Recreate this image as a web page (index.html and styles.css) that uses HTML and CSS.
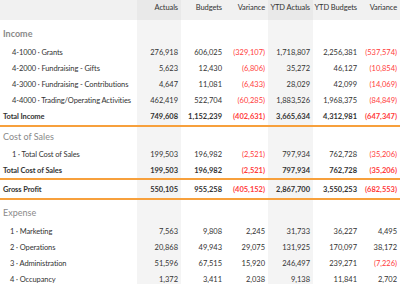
FILE: index.html
```html
<!DOCTYPE html>
<html lang="en">

<head>
    <meta charset="UTF-8">
    <title>Profit and Loss</title>
    <link rel="stylesheet" href="styles.css">
</head>

<body>
    <table class="pl">
        <colgroup>
            <col class="c-label">
            <col class="c-num shade">
            <col class="c-num">
            <col class="c-var">
            <col class="c-ytd shade">
            <col class="c-ytdb">
            <col class="c-var2">
        </colgroup>
        <thead>
            <tr>
                <th></th>
                <th class="shade">Actuals</th>
                <th>Budgets</th>
                <th>Variance</th>
                <th class="shade">YTD Actuals</th>
                <th>YTD Budgets</th>
                <th>Variance</th>
            </tr>
        </thead>
        <tbody>
            <tr class="section first">
                <td class="strong">Income</td>
                <td class="shade"></td><td></td><td></td><td class="shade"></td><td></td><td></td>
            </tr>
            <tr class="item">
                <td>4-1000 · Grants</td>
                <td class="shade">276,918</td><td>606,025</td><td class="neg">(329,107)</td>
                <td class="shade">1,718,807</td><td>2,256,381</td><td class="neg">(537,574)</td>
            </tr>
            <tr class="item">
                <td>4-2000 · Fundraising - Gifts</td>
                <td class="shade">5,623</td><td>12,430</td><td class="neg">(6,806)</td>
                <td class="shade">35,272</td><td>46,127</td><td class="neg">(10,854)</td>
            </tr>
            <tr class="item">
                <td>4-3000 · Fundraising - Contributions</td>
                <td class="shade">4,647</td><td>11,081</td><td class="neg">(6,433)</td>
                <td class="shade">28,029</td><td>42,099</td><td class="neg">(14,069)</td>
            </tr>
            <tr class="item">
                <td>4-4000 · Trading/Operating Activities</td>
                <td class="shade">462,419</td><td>522,704</td><td class="neg">(60,285)</td>
                <td class="shade">1,883,526</td><td>1,968,375</td><td class="neg">(84,849)</td>
            </tr>
            <tr class="total t-income">
                <td>Total Income</td>
                <td class="shade">749,608</td><td>1,152,239</td><td class="neg">(402,631)</td>
                <td class="shade">3,665,634</td><td>4,312,981</td><td class="neg">(647,347)</td>
            </tr>
            <tr class="section cos">
                <td>Cost of Sales</td>
                <td class="shade"></td><td></td><td></td><td class="shade"></td><td></td><td></td>
            </tr>
            <tr class="item">
                <td>1 · Total Cost of Sales</td>
                <td class="shade">199,503</td><td>196,982</td><td class="neg">(2,521)</td>
                <td class="shade">797,934</td><td>762,728</td><td class="neg">(35,206)</td>
            </tr>
            <tr class="total">
                <td>Total Cost of Sales</td>
                <td class="shade">199,503</td><td>196,982</td><td class="neg">(2,521)</td>
                <td class="shade">797,934</td><td>762,728</td><td class="neg">(35,206)</td>
            </tr>
            <tr class="total gross">
                <td>Gross Profit</td>
                <td class="shade">550,105</td><td>955,258</td><td class="neg">(405,152)</td>
                <td class="shade">2,867,700</td><td>3,550,253</td><td class="neg">(682,553)</td>
            </tr>
            <tr class="section exp">
                <td>Expense</td>
                <td class="shade"></td><td></td><td></td><td class="shade"></td><td></td><td></td>
            </tr>
            <tr class="item sub">
                <td>1 · Marketing</td>
                <td class="shade">7,563</td><td>9,808</td><td>2,245</td>
                <td class="shade">31,733</td><td>36,227</td><td>4,495</td>
            </tr>
            <tr class="item sub">
                <td>2 · Operations</td>
                <td class="shade">20,868</td><td>49,943</td><td>29,075</td>
                <td class="shade">131,925</td><td>170,097</td><td>38,172</td>
            </tr>
            <tr class="item sub">
                <td>3 · Administration</td>
                <td class="shade">51,596</td><td>67,515</td><td>15,920</td>
                <td class="shade">246,497</td><td>239,271</td><td class="neg">(7,226)</td>
            </tr>
            <tr class="item sub">
                <td>4 · Occupancy</td>
                <td class="shade">1,372</td><td>3,411</td><td>2,038</td>
                <td class="shade">9,138</td><td>11,841</td><td>2,702</td>
            </tr>
        </tbody>
    </table>
</body>

</html>
```

FILE: styles.css
```css
:root {
    --text-color: #333333;
    --muted-color: #8a8a8a;
    --header-bg: #f1f1f1;
    --header-shade: #e9e9e9;
    --shade-bg: #f4f4f4;
    --negative: #ff3b3b;
    --rule: #f7a03c;
}

body {
    margin: 0;
    background: #ffffff;
    font-family: Lato, 'Liberation Sans', Arial, sans-serif;
    color: var(--text-color);
    overflow: hidden;
}

.pl {
    border-collapse: collapse;
    table-layout: fixed;
    width: 400px;
    font-size: 7.5px;
}

.c-label { width: 137px; }
.c-num { width: 44px; }
.c-var { width: 43px; }
.c-ytd { width: 45px; }
.c-ytdb { width: 47px; }
.c-var2 { width: 40px; }

.pl th,
.pl td {
    padding: 0 3px 0 0;
    text-align: right;
    white-space: nowrap;
    overflow: hidden;
}

.pl td:first-child {
    text-align: left;
    letter-spacing: -0.1px;
}

.pl td.shade {
    background-color: var(--shade-bg);
}

.pl thead th {
    height: 20px;
    background-color: var(--header-bg);
    font-weight: normal;
    vertical-align: top;
    padding-top: 3px;
    box-sizing: border-box;
    letter-spacing: -0.1px;
}

.pl thead th.shade {
    background-color: var(--header-shade);
}

.section td {
    height: 19px;
    color: var(--muted-color);
    font-size: 9px;
}

.section td:first-child {
    padding-left: 3px;
    letter-spacing: 0;
}

.section.first td {
    height: 21px;
    padding-top: 3px;
}

.section.exp td {
    height: 22px;
    padding-top: 1px;
}

.section .strong {
    font-weight: bold;
}

.item td {
    height: 16px;
}

.item td:first-child {
    padding-left: 12px;
}

.item.sub td:first-child {
    padding-left: 10px;
}

.total td {
    height: 16px;
    font-weight: bold;
    border-bottom: 2px solid var(--rule);
}

.total td:first-child {
    padding-left: 3px;
}

.t-income td {
    height: 17px;
}

.gross td {
    height: 18px;
}

.neg {
    color: var(--negative);
}
```
